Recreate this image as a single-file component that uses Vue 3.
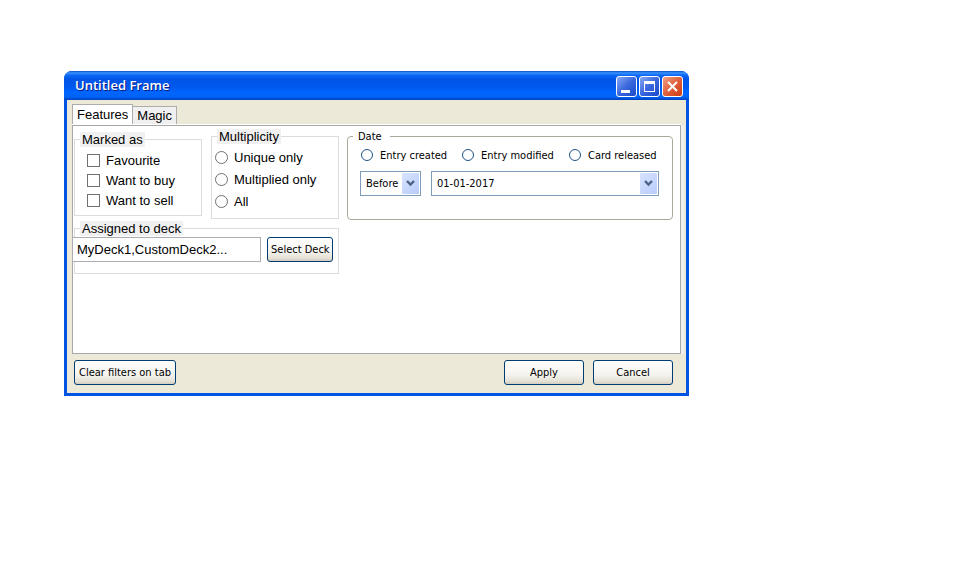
<script setup>
import { ref } from 'vue'

const tabs = ['Features', 'Magic']
const activeTab = ref('Features')
const marks = ['Favourite', 'Want to buy', 'Want to sell']
const marked = ref([])
const multiplicities = ['Unique only', 'Multiplied only', 'All']
const multiplicity = ref('')
const dateKinds = ['Entry created', 'Entry modified', 'Card released']
const dateKind = ref('')
const relation = ref('Before')
const date = ref('01-01-2017')
const decks = ref('MyDeck1,CustomDeck2...')

function clearFilters() {
  marked.value = []
  multiplicity.value = ''
  dateKind.value = ''
  decks.value = ''
}
</script>

<template>
  <main class="page">
    <section class="window">
      <header class="titlebar">
        <h1>Untitled Frame</h1>
        <div class="controls">
          <button class="control" type="button" aria-label="Minimize">
            <svg viewBox="0 0 19 19"><path d="M4 13h9v3H4z" fill="#fff" /></svg>
          </button>
          <button class="control" type="button" aria-label="Maximize">
            <svg viewBox="0 0 19 19"><path d="M4 4h11v11H4zM5 7v7h9V7z" fill="#fff" fill-rule="evenodd" /></svg>
          </button>
          <button class="control close" type="button" aria-label="Close">
            <svg viewBox="0 0 19 19"><path d="M5 5l9 9M14 5l-9 9" fill="none" stroke="#fff" stroke-width="2" /></svg>
          </button>
        </div>
      </header>

      <div class="body">
        <nav class="tabs" role="tablist">
          <button
            v-for="tab in tabs"
            :key="tab"
            type="button"
            role="tab"
            class="tab"
            :class="{ active: tab === activeTab }"
            :aria-selected="tab === activeTab"
            @click="activeTab = tab"
          >{{ tab }}</button>
        </nav>

        <div class="panel" role="tabpanel">
          <fieldset class="group marked">
            <legend>Marked as</legend>
            <label v-for="item in marks" :key="item" class="choice">
              <input v-model="marked" type="checkbox" :value="item">{{ item }}
            </label>
          </fieldset>

          <fieldset class="group multiplicity">
            <legend>Multiplicity</legend>
            <label v-for="item in multiplicities" :key="item" class="choice">
              <input v-model="multiplicity" type="radio" name="multiplicity" :value="item">{{ item }}
            </label>
          </fieldset>

          <fieldset class="group date">
            <legend>Date</legend>
            <div class="kinds">
              <label v-for="item in dateKinds" :key="item" class="choice">
                <input v-model="dateKind" type="radio" name="date-kind" :value="item">{{ item }}
              </label>
            </div>
            <div class="fields">
              <div class="combo">
                <select v-model="relation" aria-label="Relation">
                  <option>Before</option>
                  <option>After</option>
                </select>
                <span class="arrow"><svg viewBox="0 0 9 7"><path d="M1 1l3.5 3.5L8 1" /></svg></span>
              </div>
              <div class="combo wide">
                <select v-model="date" aria-label="Date">
                  <option>01-01-2017</option>
                </select>
                <span class="arrow"><svg viewBox="0 0 9 7"><path d="M1 1l3.5 3.5L8 1" /></svg></span>
              </div>
            </div>
          </fieldset>

          <fieldset class="group deck">
            <legend>Assigned to deck</legend>
            <div class="deck-row">
              <input v-model="decks" type="text" aria-label="Assigned to deck">
              <button class="push" type="button">Select Deck</button>
            </div>
          </fieldset>
        </div>

        <footer class="actions">
          <button class="push clear" type="button" @click="clearFilters">Clear filters on tab</button>
          <button class="push action" type="button">Apply</button>
          <button class="push action" type="button">Cancel</button>
        </footer>
      </div>
    </section>
  </main>
</template>

<style>
body {
  background: #fff;
}
</style>

<style scoped>
* {
  box-sizing: border-box;
}
.page {
  padding: 71px 265px 40px 64px;
  color: #000;
  font: 13px/15px "Liberation Sans", Arial, sans-serif;
}
button,
input,
select {
  margin: 0;
  color: inherit;
  font: inherit;
}
.window {
  min-width: 625px;
  border-radius: 8px 8px 0 0;
  background: #0054e3;
}
.titlebar {
  display: flex;
  align-items: center;
  justify-content: space-between;
  height: 29px;
  padding: 2px 6px 0 11px;
  border-radius: 8px 8px 0 0;
  background: linear-gradient(#0a50c8 0, #3a93ff 2px, #0f6af5 4px, #0055e5 8px, #0058ee 16px, #0066ff 22px, #0062f5 26px, #0040bd 29px);
}
h1 {
  margin: 0;
  padding-bottom: 4px;
  color: #fff;
  font: 600 13px/18px "Open Sans", sans-serif;
  text-shadow: 1px 1px #0a1883;
}
.controls {
  display: flex;
  gap: 2px;
}
.control {
  width: 21px;
  height: 21px;
  padding: 0;
  border: 1px solid #fff;
  border-radius: 3px;
  background: linear-gradient(135deg, #88a8f4, #3a67dd 50%, #1b48c9);
}
.control.close {
  background: linear-gradient(135deg, #f0a088, #e0603c 50%, #d03c10);
}
.control svg {
  display: block;
  width: 19px;
  height: 19px;
}
.body {
  margin: 0 3px;
  padding: 4px 5px 8px;
  background: #ece9d8;
}
.window::after {
  display: block;
  height: 3px;
  content: "";
}
.tabs {
  display: flex;
  align-items: flex-end;
  height: 21px;
  border-bottom: 1px solid #fff;
}
.tab {
  height: 18px;
  padding: 0 4px;
  border: 1px solid #acacac;
  border-bottom: 0;
  border-left: 0;
  background: #f0f0f0;
}
.tab.active {
  height: 20px;
  border-left: 1px solid #acacac;
  background: #fff;
}
.panel {
  display: grid;
  grid-template-columns: 128px 128px 1fr;
  grid-template-rows: auto 1fr;
  align-items: start;
  column-gap: 9px;
  min-height: 229px;
  padding: 3px 7px 0 1px;
  border: 1px solid #a8a8a8;
  background: #fff;
  box-shadow: 3px 0 #f0f0ee;
}
.group {
  min-width: 0;
  margin: 0;
  border: 1px solid #dcdcdc;
}
legend {
  height: 15px;
  padding: 0 2px;
  background: #f0f0f0;
}
.choice {
  display: flex;
  align-items: center;
  gap: 6px;
  white-space: nowrap;
}
.marked {
  margin-top: 3px;
  padding: 3px 5px 5px;
}
.marked .choice {
  height: 20px;
  padding-left: 7px;
}
.multiplicity {
  padding: 2px 5px 6px;
}
.multiplicity .choice {
  height: 22px;
  margin-left: -2px;
}
input[type="checkbox"],
input[type="radio"] {
  flex: none;
  width: 13px;
  height: 13px;
  border: 1px solid #707070;
  background: #fff;
  appearance: none;
}
input[type="radio"] {
  border-radius: 50%;
}
input:checked {
  box-shadow: inset 0 0 0 2px #fff;
  background: #333;
}
.date {
  margin-left: -1px;
  padding: 0 13px 23px 12px;
  border-color: #aca899;
  border-radius: 4px;
  font: 11px/15px "DejaVu Sans Condensed", "DejaVu Sans", sans-serif;
}
.date legend {
  margin-left: -7px;
  padding: 0 8px 0 5px;
  background: #fff;
}
.kinds {
  display: grid;
  grid-template-columns: 101px 107px 1fr;
  height: 22px;
  margin-left: 1px;
}
.kinds input[type="radio"] {
  width: 12px;
  height: 12px;
  border-color: #1d5281;
}
.kinds .choice {
  gap: 7px;
}
.fields {
  display: flex;
  gap: 10px;
  margin-top: 5px;
}
.combo {
  display: grid;
  align-items: center;
  width: 61px;
  height: 25px;
}
.combo.wide {
  flex: 1;
}
.combo > * {
  grid-area: 1 / 1;
}
.combo select {
  width: 100%;
  height: 25px;
  padding: 0 20px 0 5px;
  border: 1px solid #7f9db9;
  border-radius: 0;
  background: #fff;
  appearance: none;
}
.arrow {
  display: flex;
  align-items: center;
  justify-content: center;
  justify-self: end;
  width: 17px;
  height: 21px;
  margin-right: 2px;
  border-radius: 1px;
  background: linear-gradient(135deg, #d8e3fe, #b8ccfa);
  pointer-events: none;
}
.arrow svg {
  width: 9px;
  height: 7px;
  fill: none;
  stroke: #4d6185;
  stroke-width: 2.4;
}
.deck {
  grid-column: 1 / 3;
  margin-top: 1px;
  padding: 1px 5px 11px;
}
.deck-row {
  display: flex;
  align-items: center;
  gap: 6px;
  margin-left: -8px;
}
.deck-row input {
  flex: 1;
  min-width: 0;
  height: 25px;
  padding: 0 4px;
  border: 1px solid #abadb3;
  background: #fff;
}
.push {
  height: 25px;
  padding: 0 3px;
  border: 1px solid #003c74;
  border-radius: 3px;
  background: linear-gradient(#fff, #f4f3ee 60%, #e4e0d4 88%, #d2ccc0);
  font: 11px/15px "DejaVu Sans Condensed", "DejaVu Sans", sans-serif;
  white-space: nowrap;
}
.deck-row .push {
  width: 66px;
}
.actions {
  display: flex;
  gap: 9px;
  padding: 6px 8px 0 2px;
}
.clear {
  width: 102px;
  margin-right: auto;
}
.action {
  width: 80px;
}
</style>
